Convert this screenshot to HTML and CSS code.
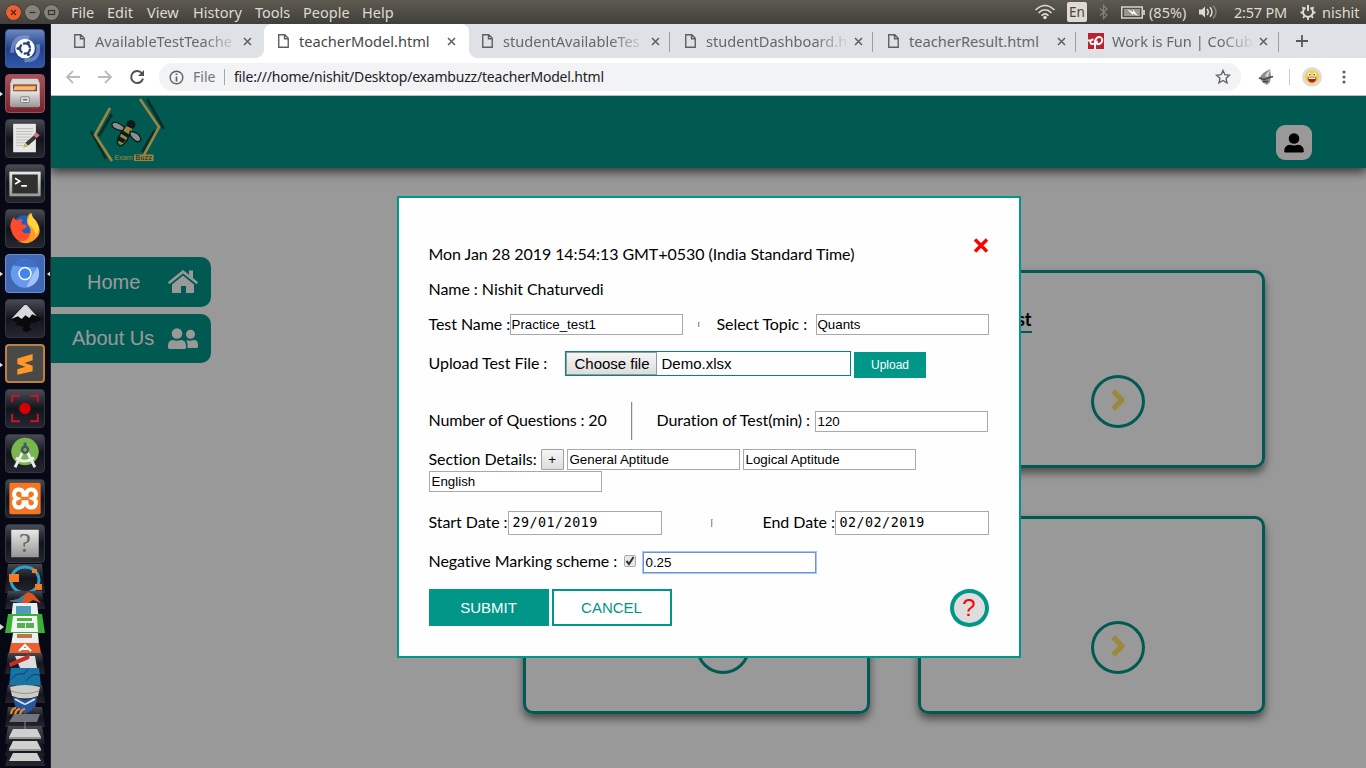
FILE: index.html
```html
<!DOCTYPE html>
<html lang="en">
<head>
<meta charset="utf-8">
<title>teacherModel.html</title>
<link rel="stylesheet" href="styles.css">
</head>
<body>
<svg class="defs" width="0" height="0">
  <defs>
    <symbol id="page" viewBox="0 0 11 14"><path d="M.75.75h6l3.5 3.5v9H.75zM6.5 1v3.7h3.7" fill="none" stroke="#5f5f5f" stroke-width="1.4"/></symbol>
    <symbol id="x" viewBox="0 0 9 9"><path d="M1 1l7 7M8 1L1 8" stroke="#5f6368" stroke-width="1.6"/></symbol>
    <symbol id="chev" viewBox="0 0 16 24"><path d="M3 3l9 9-9 9" fill="none" stroke="#ffe669" stroke-width="5.4" stroke-linejoin="round"/></symbol>
    <linearGradient id="metal" x2="0" y2="1"><stop stop-color="#e8e8e6"/><stop offset="1" stop-color="#969694"/></linearGradient>
    <linearGradient id="dark" x2="0" y2="1"><stop stop-color="#464952"/><stop offset=".5" stop-color="#14151d"/><stop offset="1" stop-color="#25262f"/></linearGradient>
  </defs>
</svg>

<header class="topbar">
  <span class="wbtn close"><svg width="15" height="15" viewBox="0 0 15 15"><path d="M5 5l5 5M10 5l-5 5" stroke="#5b2410" stroke-width="1.3"/></svg></span>
  <span class="wbtn"><svg width="15" height="15" viewBox="0 0 15 15"><path d="M4.500 7.500h6" stroke="#35342f" stroke-width="1.300"/></svg></span>
  <span class="wbtn"><svg width="15" height="15" viewBox="0 0 15 15"><rect x="4.500" y="5.500" width="6" height="4" fill="none" stroke="#35342f" stroke-width="1.2"/></svg></span>
  <nav class="menus"><span class="m1">File</span><span class="m2">Edit</span><span class="m3">View</span><span class="m4">History</span><span class="m5">Tools</span><span class="m6">People</span><span class="m7">Help</span></nav>
  <div class="tray">
    <svg width="22" height="16" viewBox="0 0 22 16" fill="none" stroke="#dfdbd2" stroke-width="1.6"><path d="M1.500 6Q11-3 20.500 6M4.500 9Q11 2.500 17.500 9M7.500 11.800Q11 8 14.500 11.800"/><circle cx="11" cy="13.500" r="1" fill="#dfdbd2"/></svg>
    <span class="lang">En</span>
    <svg class="bt" width="9" height="16" viewBox="0 0 9 16" fill="none" stroke="#85827b" stroke-width="1.2"><path d="M1 4.500l7 6.500-3.500 3.500v-13L8 5 1 11.500"/></svg>
    <svg class="bat" width="25" height="13" viewBox="0 0 25 13"><rect x=".75" y="1" width="20.500" height="11" fill="none" stroke="#dfdbd2" stroke-width="1.4"/><rect x="3" y="3" width="16" height="7" fill="#9b978f"/><path d="M23 4v5" stroke="#dfdbd2" stroke-width="1.600"/><path d="M6 3l6 3v-2.500l5 6.500-5-2.500V9z" fill="#fff"/></svg>
    <span class="pct">(85%)</span>
    <svg class="vol" width="20" height="16" viewBox="0 0 20 16" fill="none" stroke="#dfdbd2" stroke-width="1.500"><path d="M1 5.500h3l3-3v11l-3-3H1z" fill="#dfdbd2" stroke="none"/><path d="M9 5q2.500 3 0 6M12 3.200q4 4.800 0 9.600"/><path d="M15 1.500q6 6.500 0 13" stroke="#85827b"/></svg>
    <span class="clock">2:57 PM</span>
    <svg class="gear" width="16" height="16" viewBox="0 0 16 16" fill="none" stroke="#dfdbd2"><path d="M5.500 3.600a5 5 0 1 0 5 0" stroke-width="2"/><path d="M8 1v6" stroke-width="2"/><path d="M2.200 3.200l2 1.500M13.800 3.200l-2 1.500M.5 8.500h2.600M15.500 8.500h-2.600M3 14l1.500-2M13 14l-1.500-2M8 13v3" stroke-width="1.800"/></svg>
    <span class="user">nishit</span>
  </div>
</header>

<div class="desktop">
  <aside class="launcher">
    <div class="tile blue"><svg viewBox="0 0 39 39"><path d="M6 24Q6 5 24 8M33 15Q36 33 19 32" fill="none" stroke="#93a9d6" stroke-width="4" opacity=".6"/><circle cx="19.500" cy="19.500" r="10.300" fill="#fff"/><circle cx="19.500" cy="19.500" r="5.300" fill="none" stroke="#25427f" stroke-width="2.400" stroke-dasharray="9.500 1.600"/><g fill="#25427f"><circle cx="12.200" cy="19.500" r="1.700"/><circle cx="23" cy="13.300" r="1.700"/><circle cx="23" cy="25.700" r="1.700"/></g></svg></div>
    <div class="tile red"><svg viewBox="0 0 39 39"><path d="M6 4h27l2 5v24H4V9z" fill="#d9d9d6"/><path d="M7 10h25v9H7z" fill="#5c3521"/><path d="M8 11h23v5H8z" fill="#e97838"/><path d="M9 12h22l-2 4H7z" fill="#f6ba77"/><rect x="4.500" y="17" width="30" height="17" rx="1" fill="url(#metal)"/><rect x="15" y="23" width="9" height="6" rx="1" fill="#eee" stroke="#777"/><path d="M17 26h5" stroke="#777" stroke-width="2"/></svg><i class="run"></i></div>
    <div class="tile"><svg viewBox="0 0 39 39"><path d="M7 4h24v30H7z" fill="#e7e7e5"/><path d="M10 9h18M10 12h18M10 15h17M10 18h16M10 21h14M10 24h10M10 27h8" stroke="#bbb"/><path d="M18 29l2-5 9-8 3 3-9 8z" fill="#38383a"/><path d="M18 29l2-5 3 3z" fill="#e8bd4b"/><path d="M28 16l3-3 4 3-3 3z" fill="#dd6c83"/></svg></div>
    <div class="tile"><svg viewBox="0 0 39 39"><path d="M3 7h33v26H3z" fill="url(#metal)"/><path d="M6 10h27v20H6z" fill="#30312f"/><path d="M9 14l5 3-5 3M15.500 22h6" fill="none" stroke="#fff" stroke-width="1.700"/></svg></div>
    <div class="tile"><svg viewBox="0 0 39 39"><circle cx="19.500" cy="19.500" r="14" fill="#1c5fc4"/><path d="M4 18q0-6 4-11 0 3 3 4 3-2 6-1-2 3-1 5 5 0 6 2-3 3-6 4 2 5 8 3l5 2-6 8Q8 36 4 18z" fill="#ff4b2b"/><path d="M22 15q-2-7 3-12 1 5 6 8 8 12 0 19-8 8-20 3 12 1 14-8 1-6-3-10z" fill="#ff9826"/><path d="M23 15q-1-7 3-12 1 5 5 9 6 8 0 15-1-7-8-12z" fill="#ffd43c"/></svg></div>
    <div class="tile chrome"><svg viewBox="0 0 39 39"><circle cx="19.500" cy="19.500" r="15" fill="#679bed"/><path d="M7 11a15 15 0 0 1 26 2H20z" fill="#3d70cc"/><path d="M33 13a15 15 0 0 1-12 21l6-12z" fill="#a2c3fa"/><circle cx="19.500" cy="19.500" r="7" fill="#fff"/><circle cx="19.500" cy="19.500" r="5.500" fill="#4384ee"/></svg><i class="run"></i><i class="run focus"></i></div>
    <div class="tile"><svg viewBox="0 0 39 39"><path d="M19.500 4L36 20q-4 4-10 4l-2 5 3 2-6 3-4-2 1-4-9-2 3-2-8-4z" fill="#090909"/><path d="M18 6q2-2 4 0l10 11-5-2-3 4-4-3-4 4-4-3-7 3z" fill="#d8dadd"/></svg></div>
    <div class="tile sublime"><svg viewBox="0 0 39 39"><path d="M11 14l17-5v7l-9 3 9 3v6l-17 4v-6l9-3-9-3z" fill="#ff9827"/></svg><i class="run"></i></div>
    <div class="tile"><svg viewBox="0 0 39 39"><path d="M6 13V6h8M25 6h8v7M6 25v8h8M25 33h8v-8" fill="none" stroke="#c91824" stroke-width="2"/><circle cx="19.500" cy="19.500" r="6" fill="#d50000"/></svg></div>
    <div class="tile"><svg viewBox="0 0 39 39"><circle cx="19.500" cy="17.500" r="14.500" fill="#79b64b"/><path d="M17 18L9 34M22 18l8 16M10 24q9 7 19 0" fill="none" stroke="#ececec" stroke-width="3"/><circle cx="19.500" cy="15.500" r="4.500" fill="#455a64"/><circle cx="19.500" cy="15.500" r="1.800" fill="#79b64b"/><path d="M18 8h3v5h-3z" fill="#455a64"/></svg></div>
    <div class="tile"><svg viewBox="0 0 39 39"><rect x="3" y="3" width="33" height="33" rx="2" fill="#f37623"/><path d="M18 15.500v-1a5 5 0 1 0-7 5 5 5 0 1 0 7 5v-1h3v1a5 5 0 1 0 7-5 5 5 0 1 0-7-5v1z" fill="none" stroke="#fff" stroke-width="4.200"/></svg></div>
    <div class="tile"><svg viewBox="0 0 39 39"><rect x="5" y="5" width="29" height="29" fill="url(#metal)"/><text x="19.500" y="28" text-anchor="middle" class="qm">?</text></svg></div>
    <svg class="stack" width="51" height="203" viewBox="0 0 51 203">
      <path d="M8 1h34l3 29H5z" fill="url(#dark)"/><ellipse cx="25" cy="17" rx="14" ry="13" fill="none" stroke="#319fc7" stroke-width="3"/><path d="M9 11h10v8H9zM32 6h5v4h-5zM35 21h7v6h-7z" fill="#f67c22"/>
      <path d="M8 28h34l3 18H5z" fill="url(#dark)"/><path d="M9 38l9-2 10-7 5 2 8 9-8-3-6 4-8-2z" fill="#d85420"/><path d="M9 38l9-2 8-5-5 9z" fill="#347eaa"/>
      <path d="M13 40h24l2 16H11z" fill="#e9eef0"/><path d="M16 43h15v9H16z" fill="#4f9ab9"/>
      <path d="M8 51h34l3 19H5z" fill="#3eaf36"/><path d="M13 53h24l1 16H11z" fill="#f2f4ef"/><path d="M17 55h15v3H17zM17 60h8v5h-8zM26 60h8v5h-8z" fill="#56ae50"/>
      <path d="M13 70h25l1 12H11z" fill="#eee"/><path d="M17 71h15v4H17z" fill="#b8754e"/><path d="M11 80h28l2 10H9z" fill="#e95f2d"/><path d="M19 88l6-6 6 6M21 86h8" fill="none" stroke="#fff" stroke-width="2"/>
      <path d="M8 90h34l3 21H5z" fill="url(#dark)"/><path d="M15 93h20l2 12H20z" fill="#ddd"/><path d="M9 100l21-9-1 5-19 8z" fill="#c42e29"/>
      <path d="M11 105h28l2 18H9z" fill="#1774a7"/><path d="M9 119q6-10 15-8l4-5M26 118q8-10 14-5" fill="none" stroke="#123d61"/>
      <path d="M8 122h34l3 18H5z" fill="url(#dark)"/><path d="M10 124q15-4 30 0l-2 9q-13 5-26 0z" fill="#cbcbc7"/><path d="M11 128q14 5 28 0" fill="none" stroke="#92928e"/>
      <path d="M13 134l12 3 12-3-2 12-10 5-9-5z" fill="#29559b"/><path d="M15 136l9 5v6M35 136l-9 5v6" stroke="#d7e5f8" stroke-width="2" fill="none"/><path d="M8 144h34l3 20H5z" fill="url(#dark)"/><path d="M16 139l9 3 9-3-2 8-7 4-7-4z" fill="#29559b"/><path d="M11 151q1-6 5-6M15 152q1-6 5-6M20 152q1-6 5-6" stroke="#f88b23" stroke-width="2" fill="none"/><path d="M14 151h26l-3 8H9z" fill="#71747a"/>
      <g fill="url(#dark)"><path d="M8 163h34l3 18H5zM9 177h33l3 16H5zM9 188h33l3 15H5z"/></g><path d="M25 158v8" stroke="#888"/><path d="M13 166h24l4 8H9zM13 178h24l4 8H9zM13 190h24l4 8H9z" fill="#d0d0ce"/><path d="M9 174h32v2H9zM9 186h32v2H9z" fill="#969694"/><path d="M0 61l4 3-4 3z" fill="#ddd"/>
    </svg>
  </aside>

  <main class="window">
    <div class="tabs">
      <div class="tab first"><svg width="11" height="14"><use href="#page"/></svg><span class="t">AvailableTestTeache</span><svg width="9" height="9"><use href="#x"/></svg></div>
      <div class="tab active"><svg width="11" height="14"><use href="#page"/></svg><span class="t full">teacherModel.html</span><svg width="9" height="9"><use href="#x"/></svg></div>
      <div class="tab sep"><svg width="11" height="14"><use href="#page"/></svg><span class="t">studentAvailableTes</span><svg width="9" height="9"><use href="#x"/></svg></div>
      <div class="tab sep"><svg width="11" height="14"><use href="#page"/></svg><span class="t">studentDashboard.h</span><svg width="9" height="9"><use href="#x"/></svg></div>
      <div class="tab sep"><svg width="11" height="14"><use href="#page"/></svg><span class="t full">teacherResult.html</span><svg width="9" height="9"><use href="#x"/></svg></div>
      <div class="tab sep fav"><svg width="16" height="16" viewBox="0 0 16 16"><path d="M0 0h16v16H0z" fill="#b8232f"/><path d="M0 7.500h2M5.500 6.500Q2 6.500 2.500 9.500 3 12 6 10.500M7 16V8q1.500-4.500 5-4 3.500 1.500 1.500 5.500-2.500 2.500-4.500 1.500-1-1.500.5-3" fill="none" stroke="#fff" stroke-width="1.900"/></svg><span class="t">Work is Fun | CoCube</span><svg width="9" height="9"><use href="#x"/></svg></div>
      <svg class="plus" width="12" height="12"><path d="M6 0v12M0 6h12" stroke="#55585c" stroke-width="1.800"/></svg>
    </div>
    <div class="toolbar">
      <svg class="nav" width="16" height="16" viewBox="0 0 16 16"><path d="M15 8H2M8 2L2 8l6 6" fill="none" stroke="#b9bbbe" stroke-width="1.800"/></svg>
      <svg class="nav" width="16" height="16" viewBox="0 0 16 16"><path d="M1 8h13M8 2l6 6-6 6" fill="none" stroke="#b9bbbe" stroke-width="1.800"/></svg>
      <svg class="nav" width="16" height="16" viewBox="0 0 16 16"><path d="M13 4.500a6 6 0 1 0 1 5" fill="none" stroke="#505357" stroke-width="2"/><path d="M15 1v6H9z" fill="#505357"/></svg>
      <div class="omni"><svg width="15" height="15" viewBox="0 0 15 15"><circle cx="7.500" cy="7.500" r="6.300" fill="none" stroke="#5f6368" stroke-width="1.400"/><path d="M7.500 6.500v5M7.500 3.500v1.600" stroke="#5f6368" stroke-width="1.700"/></svg><span class="scheme">File</span><span class="url">file:///home/nishit/Desktop/exambuzz/teacherModel.html</span>
        <svg class="star" width="16" height="16" viewBox="0 0 16 16"><path d="M8 1.500l1.900 4.200 4.600.5-3.400 3.100.9 4.500L8 11.500l-4 2.300.9-4.500L1.500 6.200l4.600-.5z" fill="none" stroke="#5f6368" stroke-width="1.400"/></svg></div>
      <svg class="ext" width="16" height="18" viewBox="0 0 16 18"><path d="M2 9Q5 4 12 1l1 7-1 6-3 3-5-3z" fill="#8e8e8e"/><path d="M7 8l5-7-2 8z" fill="#ddd"/><path d="M1 10l5 1.500 9-3M5 13.500h5" stroke="#444" stroke-width="1.400" fill="none"/></svg>
      <i class="div"></i>
      <svg class="face" width="20" height="20" viewBox="0 0 20 20"><circle cx="10" cy="10" r="10" fill="#dcdcdc"/><circle cx="10" cy="10" r="7" fill="#f5ce4b"/><circle cx="7.500" cy="7.500" r="1.700" fill="#fff"/><circle cx="12.500" cy="7.500" r="1.700" fill="#fff"/><circle cx="7.800" cy="7.700" r=".7"/><circle cx="12.200" cy="7.700" r=".7"/><path d="M5.500 10.500h9q-.5 5-4.500 5t-4.500-5z" fill="#a91f26"/><path d="M6.500 10.800h7v1.200h-7z" fill="#fff"/></svg>
      <svg class="kebab" width="4" height="14" fill="#5f6368"><circle cx="2" cy="2" r="1.600"/><circle cx="2" cy="7" r="1.600"/><circle cx="2" cy="12" r="1.600"/></svg>
    </div>

    <div class="page">
      <div class="banner">
        <svg class="logo" width="80" height="70" viewBox="0 0 80 70">
          <g fill="none" stroke-width="2.600"><path d="M24 18L11 40M3 35l15 28" stroke="#174b3e"/><path d="M59 3l17 30M67 34L54 56" stroke="#174b3e"/><path d="M22 12L7 39l17 26" stroke="#ffe06c"/><path d="M52 3l19 28-15 28" stroke="#ffe06c"/></g>
          <g stroke="#102d29" stroke-width="1.300"><path d="M37 32Q27 23 24 28q-1 5 11 7z" fill="#ededed"/><path d="M40 35q12 1 13 8-2 6-9-1z" fill="#ededed"/><path d="M37 31q4-2 6 2-3 15-11 17-4-3-2-8z" fill="#ffe06c"/></g><path d="M34 34l8 5-2 3-8-5zM31 40l7 4-3 3-6-3z" fill="#102d29"/><circle cx="43" cy="28.500" r="4.500" fill="#102d29"/><path d="M38 31l6 3" stroke="#ffe06c" stroke-width="2.500"/>
          <rect x="46" y="58.500" width="19.500" height="6.500" fill="#ffe06c"/><text x="26.500" y="64.300" class="lt" fill="#ffe06c" textLength="18">Exam</text><text x="47.500" y="64.300" class="lt" fill="#17382f" textLength="16.500">Buzz</text>
        </svg>
        <div class="profile"><svg width="20" height="20" viewBox="0 0 20 20"><circle cx="10" cy="5.500" r="5.300"/><path d="M.8 19v-1.500q0-5 5-5.200 4.200 1.600 8.400 0 5 .2 5 5.200V19z" stroke="#000" stroke-linejoin="round"/></svg></div>
      </div>
      <div class="content">
        <nav class="side">
          <a class="item"><span>Home</span><svg width="30" height="24" viewBox="0 0 30 24" fill="#fff"><path d="M15 5.500l11 9V22q0 1-1 1h-7v-7h-5v7H5q-1 0-1-1v-7.500z"/><path d="M1.500 12.500L15 1.700l13.500 10.800" fill="none" stroke="#009688" stroke-width="5"/><path d="M1.500 12.500L15 1.700l13.500 10.800" fill="none" stroke="#fff" stroke-width="2.500" stroke-linecap="round"/><path d="M21 .5h4v8l-4-3z"/></svg></a>
          <a class="item about"><span>About Us</span><svg width="30" height="22" viewBox="0 0 30 22" fill="#fff"><circle cx="9" cy="5.500" r="5.300"/><path d="M0 19.500V18q0-6 5-6 4 1.500 8 0 5 0 5 6v1.500q0 1.500-1.500 1.500h-15Q0 21 0 19.500z"/><circle cx="22.500" cy="6.200" r="4.500"/><path d="M19.500 20H28.500q1.500 0 1.500-1.500V17q0-5-4-5-4 1.500-8 0 2 2.500 1.500 8z"/></svg></a>
        </nav>
        <section class="cards">
          <div class="card"><h2>Create Test</h2><b class="go"><svg width="16" height="24"><use href="#chev"/></svg></b></div>
          <div class="card"><h2>Modify Test</h2><b class="go"><svg width="16" height="24"><use href="#chev"/></svg></b></div>
          <div class="card"><h2></h2><b class="go"><svg width="16" height="24"><use href="#chev"/></svg></b></div>
          <div class="card"><h2></h2><b class="go"><svg width="16" height="24"><use href="#chev"/></svg></b></div>
        </section>
      </div>

      <div class="overlay">
        <div class="modal">
          <div class="row r1"><span>Mon Jan 28 2019 14:54:13 GMT+0530 (India Standard Time)</span><svg class="dismiss" width="16" height="15" viewBox="0 0 16 15"><path d="M2 1.500l12 12M14 1.500l-12 12" stroke="red" stroke-width="3.400"/></svg></div>
          <div class="row r2">Name : Nishit Chaturvedi</div>
          <div class="row r3"><label>Test Name :</label><span class="in">Practice_test1</span><i class="tick"></i><label class="topic">Select Topic :</label><span class="in end">Quants</span></div>
          <div class="row r4"><label class="up">Upload Test File :</label><span class="file"><span class="choose">Choose file</span><span>Demo.xlsx</span></span><span class="upload">Upload</span></div>
          <div class="row r5"><label class="nq">Number of Questions : 20</label><i class="rule"></i><label>Duration of Test(min) :</label><span class="in dur">120</span></div>
          <div class="row r6"><label class="sec">Section Details:</label><span class="add">+</span><span class="in">General Aptitude</span><span class="in">Logical Aptitude</span><span class="in">English</span></div>
          <div class="row r7"><label>Start Date :</label><span class="in date">29/01/2019</span><i class="tick tall"></i><label class="ed">End Date :</label><span class="in date">02/02/2019</span></div>
          <div class="row r8"><label class="neg">Negative Marking scheme :</label><span class="check"><svg width="10" height="10" viewBox="0 0 10 10"><path d="M1.500 5l2.500 3 4.500-7" fill="none" stroke="#333" stroke-width="2"/></svg></span><span class="in focused">0.25</span></div>
          <div class="row r9"><span class="btn">SUBMIT</span><span class="btn ghost">CANCEL</span><span class="help">?</span></div>
        </div>
      </div>
    </div>
  </main>
</div>
</body>
</html>
```
FILE: styles.css
```css
* { box-sizing: border-box; }
body { margin: 0; width: 1366px; height: 768px; overflow: hidden; display: flex; flex-direction: column; font-family: "Liberation Sans", Arial, sans-serif; }
svg { flex: none; display: block; }
.defs { position: absolute; }

.topbar { height: 24px; flex: none; display: flex; align-items: center; padding-left: 6px; background: linear-gradient(#5d5a50, #403f3a); color: #dfdbd2; font: 14.5px/24px "Noto Sans", sans-serif; white-space: nowrap; }
.wbtn { width: 15px; height: 15px; border-radius: 50%; margin-right: 4px; background: #85827a; box-shadow: 0 0 0 .5px #33322e; flex: none; }
.wbtn.close { background: #ee5f33; }
.menus { display: flex; margin-left: 8px; }
.menus span { flex: none; }
.m1 { width: 36px; } .m2 { width: 40px; } .m3 { width: 46px; } .m4 { width: 62px; } .m5 { width: 48px; } .m6 { width: 59px; } .m7 { width: 34px; }
.tray { margin-left: auto; width: 332px; display: flex; align-items: center; }
.lang { width: 20px; height: 20px; margin-left: 11px; background: #dfdbd2; color: #45443f; border-radius: 2px; font-size: 13.5px; line-height: 20px; text-align: center; }
.bt { margin-left: 12px; }
.bat { margin-left: 13px; }
.pct { margin-left: 3px; width: 39px; }
.vol { margin-left: 10px; }
.clock { margin-left: 16px; width: 53px; letter-spacing: -.2px; }
.gear { margin-left: 13px; }
.user { margin-left: 6px; }

.desktop { flex: 1; min-height: 0; display: flex; }
.launcher { width: 51px; flex: none; background: #060914; border-right: 1px solid #2b2024; padding: 5px 0 0 5px; display: flex; flex-direction: column; gap: 6px; overflow: hidden; }
.tile { position: relative; width: 40px; height: 39px; flex: none; border-radius: 4px; border: 1px solid #34363f; background: linear-gradient(#484b54, #13151d 50%, #25262f); }
.tile svg { width: 38px; height: 37px; }
.tile.blue { background: linear-gradient(#6c87bd, #1f408d 50%, #3159a6); border-color: #3a5797; }
.tile.red { background: linear-gradient(#a45159, #7a242d); border-color: #93515b; }
.tile.chrome { background: #4168b4; border-color: #6c8fd0; }
.tile.sublime { background: #494948; border: 2px solid #bd803e; }
.tile.sublime svg { width: 36px; height: 35px; }
.run { position: absolute; left: -7px; top: 16px; border: 3px solid transparent; border-left: 4px solid #ddd; }
.sublime .run { left: -8px; }
.run.focus { left: auto; right: -7px; border-left: 3px solid transparent; border-right: 4px solid #ddd; }
.stack { margin: -6px 0 0 -5px; }
.qm { font: 28px "Liberation Serif", serif; fill: #666; }

.window { flex: 1; min-width: 0; display: flex; flex-direction: column; }
.tabs { height: 34px; flex: none; display: flex; padding-left: 9px; background: #dee1e6; align-items: center; }
.tab { position: relative; width: 203px; height: 34px; flex: none; display: flex; align-items: center; padding-left: 14px; color: #64676b; font: 14.6px/20px "Noto Sans", sans-serif; }
.t { width: 148px; margin: 0 0 0 10px; white-space: nowrap; -webkit-mask-image: linear-gradient(90deg, #000 108px, transparent 143px); mask-image: linear-gradient(90deg, #000 108px, transparent 143px); }
.t.full { -webkit-mask-image: none; mask-image: none; }
.first { width: 204px; }
.active { background: #fff; border-radius: 8px 8px 0 0; width: 205px; margin-right: -1px; color: #45474a; }
.active::before, .active::after { content: ""; position: absolute; bottom: 0; width: 8px; height: 8px; }
.active::before { left: -8px; background: radial-gradient(circle at 0 0, transparent 7.5px, #fff 8px); }
.active::after { right: -8px; background: radial-gradient(circle at 100% 0, transparent 7.5px, #fff 8px); }
.sep { background: linear-gradient(#9b9ea3, #9b9ea3) 201px 8px / 1px 20px no-repeat; }
.fav { padding-left: 11px; }
.fav .t { margin-left: 8px; width: 147px; }
.plus { margin-left: 16px; }
.toolbar { height: 38px; flex: none; display: flex; align-items: center; padding: 1px 0 0 14px; background: #fff; border-bottom: 1px solid #b9bbbc; font: 14px/20px "Noto Sans", sans-serif; }
.nav { margin-right: 16px; }
.omni { width: 1082px; height: 28px; border-radius: 14px; background: #f1f3f4; display: flex; align-items: center; padding: 0 10px; margin-left: -2px; }
.scheme { margin-left: 9px; color: #72767b; width: 32px; border-right: 1px solid #a3a6aa; height: 16px; line-height: 16px; }
.url { margin-left: 9px; color: #1f2023; white-space: nowrap; letter-spacing: -.2px; }
.star { margin-left: auto; }
.ext { margin-left: 17px; }
.div { width: 1px; height: 16px; background: #ccc; margin-left: 15px; }
.face { margin-left: 12px; }
.kebab { margin-left: 20px; }

.page { position: relative; flex: 1; min-height: 0; background: #fff; display: flex; flex-direction: column; overflow: hidden; }
.banner { height: 72px; flex: none; background: #009688; box-shadow: 0 3px 10px 1px rgba(0,0,0,.65); display: flex; padding: 0 54px 0 37px; justify-content: space-between; }
.lt { font: 7px "Liberation Sans", sans-serif; }
.profile { width: 36px; height: 35px; margin-top: 29px; border-radius: 9px; background: #fff; display: grid; place-items: center; }
.content { display: flex; }
.side { width: 160px; padding-top: 89px; display: flex; flex-direction: column; gap: 7px; }
.item { height: 50px; background: #009688; border-radius: 0 10px 10px 0; color: #fff; font-size: 20px; display: flex; align-items: center; padding-left: 36px; }
.item span { width: 81px; white-space: nowrap; }
.about { height: 49px; padding-left: 21px; }
.about span { width: 96px; }
.cards { margin: 102px 0 0 312px; display: grid; grid-template-columns: 347px 347px; grid-auto-rows: 198px; gap: 48px; }
.card { border: 3px solid #009688; border-radius: 10px; box-shadow: 0 5px 8px rgba(0,0,0,.5); display: flex; flex-direction: column; align-items: center; }
.card h2 { margin: 34px 214px 0 0; height: 26px; font: bold 18px/24px Lato, sans-serif; border-bottom: 2px solid #009688; white-space: nowrap; }
.card:nth-child(n+3) h2 { visibility: hidden; }
.go { width: 54px; height: 53px; margin: 42px 0 0 53px; border: 3px solid #009688; border-radius: 50%; display: grid; place-items: center; padding-bottom: 3px; }

.overlay { position: absolute; inset: 0; background: rgba(0,0,0,.4); display: flex; justify-content: center; align-items: flex-start; padding: 100px 0 0 1px; }
.modal { width: 624px; height: 462px; background: #fefefe; border: 2px solid #009688; padding: 9px 30px 30px; font: 16px/20px Lato, sans-serif; letter-spacing: -.055px; color: #000; display: flex; flex-direction: column; white-space: nowrap; margin-right: 1px; }
.row { flex: none; display: flex; align-items: center; height: 35px; }
.row label { margin-top: -2px; }
.r1 { height: 65px; padding-top: 29px; justify-content: space-between; }
.dismiss { margin: -18px 0 0; }
.r2 { padding-bottom: 2px; }
.in { height: 21px; width: 173px; flex: none; border: 1px solid #a9a9a9; background: #fff; padding: 0 1px; font: 13.333px/19px "Liberation Sans", sans-serif; letter-spacing: 0; }
.r3 .in { margin-left: auto; }
.r3 label:first-child + .in { margin-left: 0; }
.r3 label:first-child { width: 81px; }
.tick { width: 2px; height: 5px; border: 1px solid #999; border-right-color: #ddd; border-bottom: 0; margin-left: 15px; }
.topic { margin-left: 17px; }
.r4 { height: 43px; }
.up { width: 136px; }
.file { width: 286px; height: 25px; border: 1px solid #00877b; display: flex; align-items: center; font: 15px/22px "Liberation Sans", sans-serif; letter-spacing: 0; }
.choose { width: 91px; height: 23px; border: 1px solid #999; background: linear-gradient(#f5f5f5, #ddd); padding-left: 8px; margin-right: 5px; line-height: 21px; }
.upload { margin: 2px 0 0 3px; width: 72px; height: 26px; padding-left: 1px; background: #009688; color: #fff; font: 12px/26px "Liberation Sans", sans-serif; letter-spacing: 0; text-align: center; }
.r5 { margin-top: 17px; height: 38px; }
.nq { width: 202px; letter-spacing: -.15px; }
.rule { width: 2px; height: 38px; border-left: 1px solid #888; border-right: 1px solid #e5e5e5; margin-right: 24px; }
.dur { margin-left: auto; margin-right: 1px; padding-left: 2px; }
.r6 { height: 43px; margin-top: 9px; flex-wrap: wrap; align-content: flex-start; gap: 1px 3px; }
.r6 .in, .r8 .in { padding-left: 2px; }
.sec { width: 109px; }
.add { width: 23px; height: 21px; border: 1px solid #a0a0a0; border-radius: 1px; background: linear-gradient(#f5f5f5, #ddd); font: 13.333px/19px "Liberation Sans", sans-serif; text-align: center; }
.r7 { height: 24px; margin-top: 19px; }
.r7 .date { width: 154px; height: 24px; padding-left: 4px; font: 13.333px/22px "DejaVu Sans Mono", monospace; letter-spacing: .5px; }
.r7 label:first-child { width: 79px; }
.tick.tall { height: 8px; margin-left: 49px; }
.ed { margin-left: auto; width: 72px; }
.r8 { height: 23px; margin-top: 16px; }
.r8 .neg { width: 195px; margin-top: -3px; }
.check { width: 12px; height: 12px; border: 1px solid #aaa; border-radius: 2px; background: #e8e8e8; margin: -3px 7px 0 0; }
.focused { border-color: #6d94d8; outline: 1px solid #a9c5f5; }
.r9 { height: 38px; margin-top: 15px; align-items: flex-start; }
.btn { width: 120px; height: 37px; border: 2px solid #009688; background: #009688; color: #fff; font: 15px/33px "Liberation Sans", sans-serif; letter-spacing: 0; text-align: center; margin-right: 3px; }
.ghost { background: #fff; color: #009688; }
.help { margin-left: auto; width: 39px; height: 38px; border: 4px solid #009688; border-radius: 50%; background: #ddd; color: red; font: 24px/30px "Liberation Sans", sans-serif; text-align: center; }
```
